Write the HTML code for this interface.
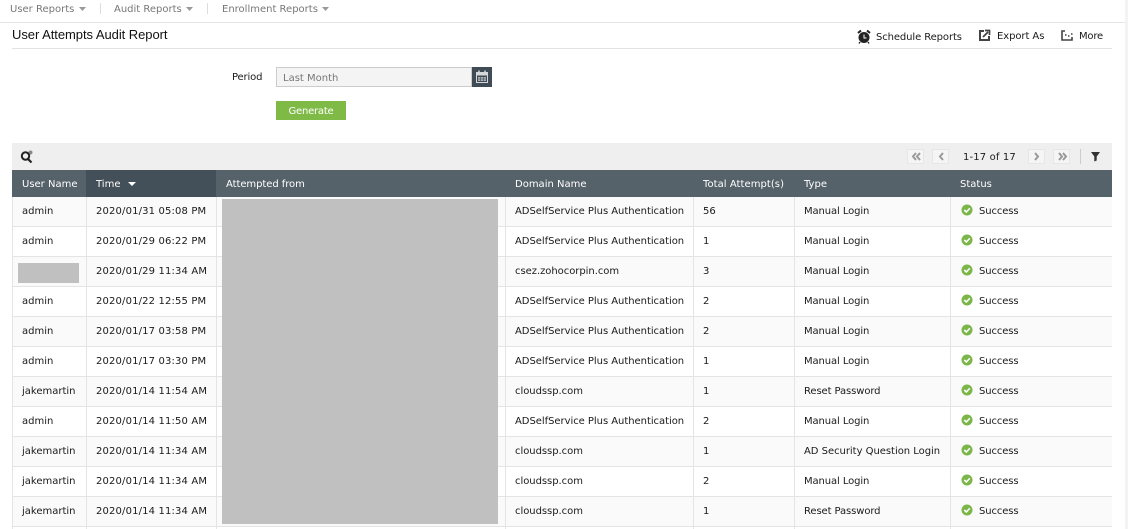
<!DOCTYPE html>
<html><head><meta charset="utf-8">
<style>
html,body{margin:0;padding:0;background:#fff;width:1128px;height:529px;overflow:hidden}
body{position:relative;font-family:"DejaVu Sans",sans-serif;font-size:10px;letter-spacing:0;color:#1a1a1a}
.a,.r,.r span,.l,.h span{position:absolute;white-space:nowrap}
.r{left:12px;width:1100px;height:30px;line-height:30px}
.r.o{background:#fafafa}
.r span:nth-child(1){left:10px}
.r span:nth-child(2){left:84px;letter-spacing:.15px}
.r span:nth-child(3){left:503px;letter-spacing:-.04px}
.r span:nth-child(4){left:691px}
.r span:nth-child(5){left:792px;letter-spacing:-.1px}
.r span:nth-child(6){left:967px;letter-spacing:-.12px}
.r svg{position:absolute;left:949px;top:7px}
.l{background:#e4e4e4}
.h{position:absolute;left:12px;top:170px;width:1100px;height:27px;background:#56626a;color:#fff;line-height:29px}
.h span{top:0}
.pg{position:absolute;top:149px;width:15px;height:13px;background:#f5f5f5;border:1px solid #e6e6e6;box-sizing:content-box}
</style></head><body>
<div class="a" style="left:10px;top:3px;color:#777;line-height:14px">User Reports</div>
<div class="a" style="left:114px;top:3px;color:#777;line-height:14px">Audit Reports</div>
<div class="a" style="left:222px;top:3px;color:#777;line-height:14px">Enrollment Reports</div>
<svg class="a" style="left:0;top:0" width="340" height="16"><path d="M79 7h7l-3.500 4zM186 7h7l-3.500 4zM322 7h7l-3.500 4z" fill="#999"/><rect x="100" y="3" width="1" height="11" fill="#ddd"/><rect x="207" y="3" width="1" height="11" fill="#ddd"/></svg>
<div class="a" style="left:0;top:22px;width:1128px;height:1px;background:#e2e6e6"></div>
<div class="a" style="left:12px;top:26px;font:13px/17px 'Liberation Sans',sans-serif;letter-spacing:-.05px;color:#111">User Attempts Audit Report</div>
<div class="a" style="left:12px;top:48px;width:1100px;height:1px;background:#e2e2e2"></div>

<svg class="a" style="left:857px;top:29px" width="14" height="15" viewBox="0 0 14 15"><circle cx="7" cy="8.500" r="5.500" fill="#222"/><path d="M1 4l3-2.500M13 4l-3-2.500" stroke="#222" stroke-width="2"/><path d="M7 5.500v3.500h2.500" stroke="#fff" fill="none"/><path d="M3 13l-1 1.500M11 13l1 1.500" stroke="#222" stroke-width="1.300"/></svg>
<div class="a" style="left:876px;top:31px;line-height:13px;letter-spacing:-.1px">Schedule Reports</div>
<svg class="a" style="left:979px;top:29px" width="12" height="12" viewBox="0 0 12 12"><path d="M5 2H1v9h9V7" fill="none" stroke="#444" stroke-width="2"/><path d="M4 8l5-5M6 1.500h4.500V6" fill="none" stroke="#444" stroke-width="1.700"/></svg>
<div class="a" style="left:997px;top:30px;line-height:13px;letter-spacing:-.07px">Export As</div>
<svg class="a" style="left:1061px;top:30px" width="12" height="11" viewBox="0 0 12 11"><path d="M4 1H1v9h10V7" fill="none" stroke="#444" stroke-width="1.600"/><path d="M4 5h1.500M7 6h1.500M10 4h1.500" fill="none" stroke="#444" stroke-width="1.600"/></svg>
<div class="a" style="left:1079px;top:30px;line-height:13px;letter-spacing:-.2px">More</div>

<div class="a" style="left:232px;top:71px;line-height:13px;letter-spacing:-.15px">Period</div>
<div class="a" style="left:276px;top:67px;width:196px;height:20px;box-sizing:border-box;background:#f4f4f4;border:1px solid #ccc;color:#777;line-height:20px;padding-left:6px"><span style="position:relative;top:1px">Last Month</span></div>
<div class="a" style="left:472px;top:67px;width:20px;height:20px;background:#3f4c55"></div>
<svg class="a" style="left:472px;top:67px" width="20" height="20" viewBox="0 0 20 20"><path d="M4.500 5.500h11v10h-11z" fill="none" stroke="#d5d8da"/><path d="M4.500 6h11v2.500h-11z" fill="#d5d8da"/><path d="M7 3.500v3M13 3.500v3" stroke="#d5d8da" stroke-width="1.500"/><path d="M6 10h8v4H6z" fill="#aab0b4"/><path d="M8.500 10v4M11.500 10v4M6 12h8" stroke="#3f4c55" stroke-width=".6"/></svg>
<div class="a" style="left:276px;top:101px;width:70px;height:19px;background:#7fba46;color:#fff;text-align:center;line-height:22px;letter-spacing:-.22px">Generate</div>

<div class="a" style="left:12px;top:143px;width:1100px;height:27px;background:#efefef"></div>
<svg class="a" style="left:20px;top:150px" width="14" height="14" viewBox="0 0 14 14"><circle cx="10.500" cy="2.500" r="2" fill="#888"/><circle cx="5.500" cy="6" r="3.700" fill="none" stroke="#222" stroke-width="2"/><path d="M8 9l3.500 3.500" stroke="#222" stroke-width="2.200"/></svg>
<div class="pg" style="left:907px"></div><div class="pg" style="left:932px"></div><div class="pg" style="left:1028px"></div><div class="pg" style="left:1053px"></div>
<svg class="a" style="left:900px;top:143px" width="210" height="27"><g fill="none" stroke="#999" stroke-width="2"><path d="M16 10l-3 3.500 3 3.500M20 10l-3 3.500 3 3.500M43 10l-3 3.500 3 3.500M135 10l3 3.500-3 3.500M159 10l3 3.500-3 3.500M163 10l3 3.500-3 3.500"/></g><rect x="180" y="6" width="1" height="15" fill="#ccc"/><path d="M191 9h9l-3.300 4.500v4l-2.400 1v-5z" fill="#333"/></svg>
<div class="a" style="left:963px;top:151px;line-height:13px;letter-spacing:.15px">1-17 of 17</div>

<div class="h"><div class="a" style="left:74px;top:0;width:130px;height:27px;background:#435059"></div>
<span style="left:10px">User Name</span><span style="left:84px">Time</span>
<svg class="a" style="left:116px;top:12px" width="9" height="5"><path d="M0 0h8l-4 4z" fill="#fff"/></svg>
<span style="left:214px;letter-spacing:-.06px">Attempted from</span><span style="left:503px">Domain Name</span><span style="left:691px;letter-spacing:.05px">Total Attempt(s)</span><span style="left:792px">Type</span><span style="left:948px">Status</span></div>

<div class="r o" style="top:197px"><span>admin</span><span>2020/01/31 05:08 PM</span><span>ADSelfService Plus Authentication</span><span>56</span><span>Manual Login</span><span>Success</span><svg width="12" height="12" viewBox="0 0 12 12"><circle cx="6" cy="6" r="5.500" fill="#7ab648"/><path d="M3.300 6l2 2 3.500-3.700" fill="none" stroke="#fff" stroke-width="1.600"/></svg></div>
<div class="r" style="top:227px"><span>admin</span><span>2020/01/29 06:22 PM</span><span>ADSelfService Plus Authentication</span><span>1</span><span>Manual Login</span><span>Success</span><svg width="12" height="12" viewBox="0 0 12 12"><circle cx="6" cy="6" r="5.500" fill="#7ab648"/><path d="M3.300 6l2 2 3.500-3.700" fill="none" stroke="#fff" stroke-width="1.600"/></svg></div>
<div class="r o" style="top:257px"><span></span><span>2020/01/29 11:34 AM</span><span>csez.zohocorpin.com</span><span>3</span><span>Manual Login</span><span>Success</span><svg width="12" height="12" viewBox="0 0 12 12"><circle cx="6" cy="6" r="5.500" fill="#7ab648"/><path d="M3.300 6l2 2 3.500-3.700" fill="none" stroke="#fff" stroke-width="1.600"/></svg></div>
<div class="r" style="top:287px"><span>admin</span><span>2020/01/22 12:55 PM</span><span>ADSelfService Plus Authentication</span><span>2</span><span>Manual Login</span><span>Success</span><svg width="12" height="12" viewBox="0 0 12 12"><circle cx="6" cy="6" r="5.500" fill="#7ab648"/><path d="M3.300 6l2 2 3.500-3.700" fill="none" stroke="#fff" stroke-width="1.600"/></svg></div>
<div class="r o" style="top:317px"><span>admin</span><span>2020/01/17 03:58 PM</span><span>ADSelfService Plus Authentication</span><span>2</span><span>Manual Login</span><span>Success</span><svg width="12" height="12" viewBox="0 0 12 12"><circle cx="6" cy="6" r="5.500" fill="#7ab648"/><path d="M3.300 6l2 2 3.500-3.700" fill="none" stroke="#fff" stroke-width="1.600"/></svg></div>
<div class="r" style="top:347px"><span>admin</span><span>2020/01/17 03:30 PM</span><span>ADSelfService Plus Authentication</span><span>1</span><span>Manual Login</span><span>Success</span><svg width="12" height="12" viewBox="0 0 12 12"><circle cx="6" cy="6" r="5.500" fill="#7ab648"/><path d="M3.300 6l2 2 3.500-3.700" fill="none" stroke="#fff" stroke-width="1.600"/></svg></div>
<div class="r o" style="top:377px"><span>jakemartin</span><span>2020/01/14 11:54 AM</span><span>cloudssp.com</span><span>1</span><span>Reset Password</span><span>Success</span><svg width="12" height="12" viewBox="0 0 12 12"><circle cx="6" cy="6" r="5.500" fill="#7ab648"/><path d="M3.300 6l2 2 3.500-3.700" fill="none" stroke="#fff" stroke-width="1.600"/></svg></div>
<div class="r" style="top:407px"><span>admin</span><span>2020/01/14 11:50 AM</span><span>ADSelfService Plus Authentication</span><span>2</span><span>Manual Login</span><span>Success</span><svg width="12" height="12" viewBox="0 0 12 12"><circle cx="6" cy="6" r="5.500" fill="#7ab648"/><path d="M3.300 6l2 2 3.500-3.700" fill="none" stroke="#fff" stroke-width="1.600"/></svg></div>
<div class="r o" style="top:437px"><span>jakemartin</span><span>2020/01/14 11:34 AM</span><span>cloudssp.com</span><span>1</span><span style="letter-spacing:-.03px">AD Security Question Login</span><span>Success</span><svg width="12" height="12" viewBox="0 0 12 12"><circle cx="6" cy="6" r="5.500" fill="#7ab648"/><path d="M3.300 6l2 2 3.500-3.700" fill="none" stroke="#fff" stroke-width="1.600"/></svg></div>
<div class="r" style="top:467px"><span>jakemartin</span><span>2020/01/14 11:34 AM</span><span>cloudssp.com</span><span>2</span><span>Manual Login</span><span>Success</span><svg width="12" height="12" viewBox="0 0 12 12"><circle cx="6" cy="6" r="5.500" fill="#7ab648"/><path d="M3.300 6l2 2 3.500-3.700" fill="none" stroke="#fff" stroke-width="1.600"/></svg></div>
<div class="r o" style="top:497px"><span>jakemartin</span><span>2020/01/14 11:34 AM</span><span>cloudssp.com</span><span>1</span><span>Reset Password</span><span>Success</span><svg width="12" height="12" viewBox="0 0 12 12"><circle cx="6" cy="6" r="5.500" fill="#7ab648"/><path d="M3.300 6l2 2 3.500-3.700" fill="none" stroke="#fff" stroke-width="1.600"/></svg></div>

<div class="l" style="left:12px;top:226px;width:1100px;height:1px"></div>
<div class="l" style="left:12px;top:256px;width:1100px;height:1px"></div>
<div class="l" style="left:12px;top:286px;width:1100px;height:1px"></div>
<div class="l" style="left:12px;top:316px;width:1100px;height:1px"></div>
<div class="l" style="left:12px;top:346px;width:1100px;height:1px"></div>
<div class="l" style="left:12px;top:376px;width:1100px;height:1px"></div>
<div class="l" style="left:12px;top:406px;width:1100px;height:1px"></div>
<div class="l" style="left:12px;top:436px;width:1100px;height:1px"></div>
<div class="l" style="left:12px;top:466px;width:1100px;height:1px"></div>
<div class="l" style="left:12px;top:496px;width:1100px;height:1px"></div>
<div class="l" style="left:12px;top:526px;width:1100px;height:1px"></div>
<div class="l" style="left:12px;top:197px;width:1px;height:332px"></div>
<div class="l" style="left:86px;top:197px;width:1px;height:332px"></div>
<div class="l" style="left:216px;top:197px;width:1px;height:332px"></div>
<div class="l" style="left:505px;top:197px;width:1px;height:332px"></div>
<div class="l" style="left:693px;top:197px;width:1px;height:332px"></div>
<div class="l" style="left:794px;top:197px;width:1px;height:332px"></div>
<div class="l" style="left:950px;top:197px;width:1px;height:332px"></div>

<div class="a" style="left:222px;top:199px;width:276px;height:325px;background:#c0c0c0"></div>
<div class="a" style="left:18px;top:263px;width:61px;height:20px;background:#c0c0c0"></div>
<div class="a" style="left:1125px;top:0;width:3px;height:529px;background:#f3f3f3"></div>
</body></html>
